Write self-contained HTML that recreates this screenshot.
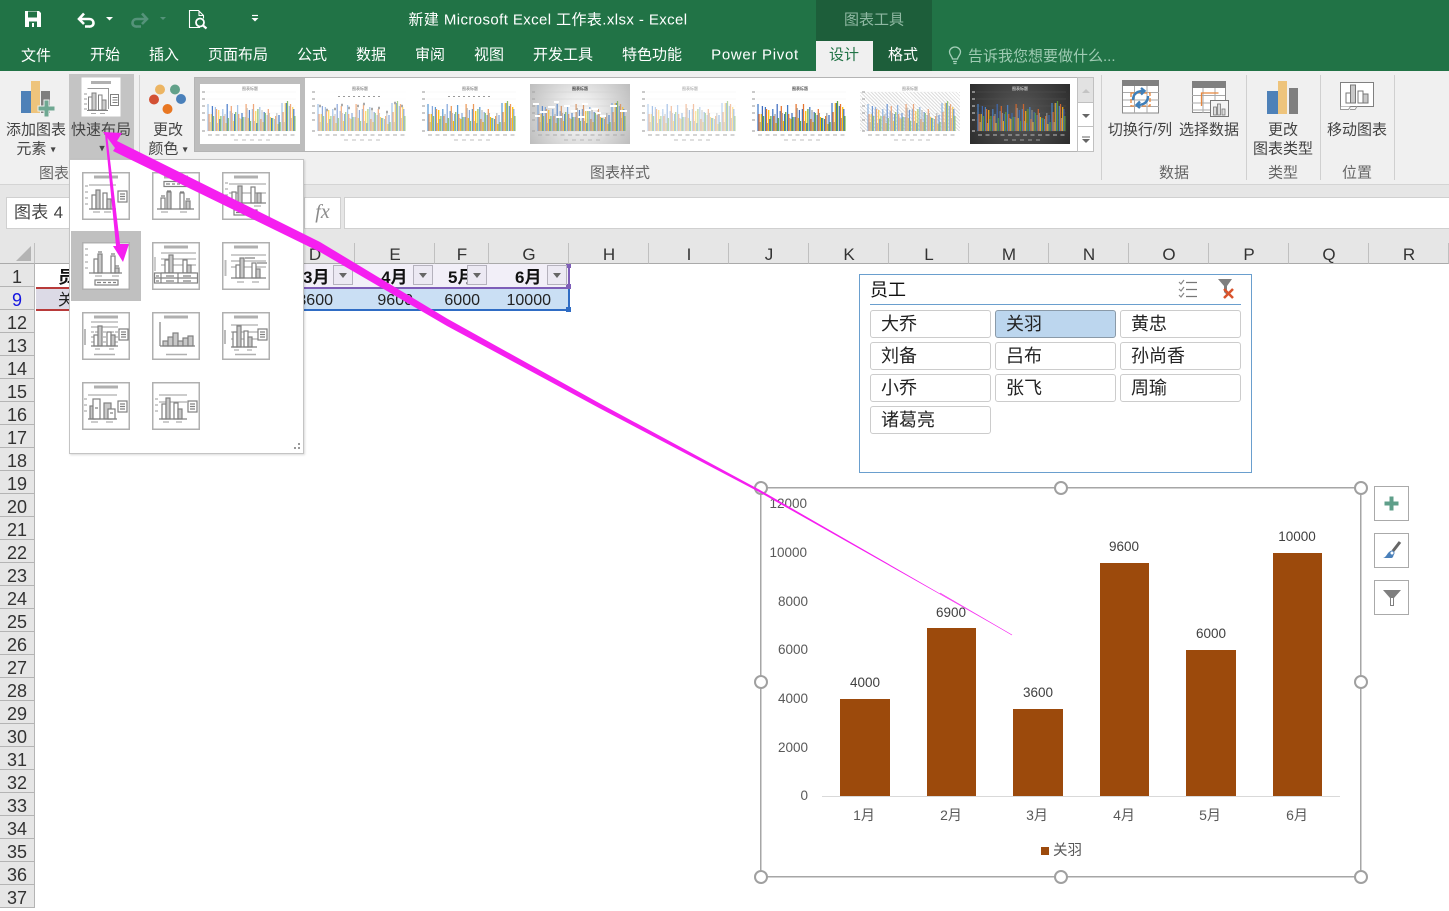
<!DOCTYPE html>
<html lang="zh"><head><meta charset="utf-8"><title>新建 Microsoft Excel 工作表.xlsx - Excel</title>
<style>
*{box-sizing:border-box}
html,body{margin:0;padding:0}
body{width:1449px;height:910px;overflow:hidden;position:relative;background:#fff;font-family:"Liberation Sans","Noto Sans CJK SC",sans-serif;color:#444}
.a{position:absolute;white-space:nowrap}
.c{position:absolute;white-space:nowrap;transform:translate(-50%,-50%);line-height:1}
.tab{font-size:15px;color:#fff;margin-top:1px}
.rb{font-size:15px;color:#444;margin-top:2px}
.gp{font-size:15px;color:#666;margin-top:1px}
.rh{position:absolute;left:0;width:35px;height:23px;background:#e6e6e6;border-bottom:1px solid #b4b4b4;border-right:1px solid #b4b4b4;text-align:center;font-size:18px;line-height:26px;color:#333}
.ch{position:absolute;top:243px;height:21px;background:#e6e6e6;border-right:1px solid #c0c0c0;border-bottom:1px solid #aaa;text-align:center;font-size:17px;line-height:23px;color:#333;padding-left:1px}
.sb{position:absolute;width:121px;height:28px;border:1px solid #ccc;border-radius:3px;background:#fff;font-size:18px;line-height:27px;padding-left:10px;color:#222}
.dd{position:absolute;top:265px;width:20px;height:20px;background:#ece9f3;border:1px solid #b5b2bd}
.dd:after{content:"";position:absolute;left:5px;top:7px;border:4px solid transparent;border-top:5px solid #666;border-bottom:0}
.hd{position:absolute;font-size:17px;font-weight:bold;color:#111;line-height:22px;top:267px}
.dt{position:absolute;font-size:16px;color:#222;line-height:22px;top:290px;text-align:right}
.ico{position:absolute;width:48px;height:48px;background:#fff}
.ico path.t{stroke:#b0b0b0;stroke-width:3;fill:none}
.ico path.l{stroke:#999;stroke-width:1;fill:none}
.ico path.k{stroke:#808080;stroke-width:1.2;fill:none}
.ico rect.w{fill:#fff;stroke:#808080;stroke-width:1.2}
.ico rect.g{fill:#c8c8c8;stroke:#808080;stroke-width:1.2}
.ico rect.f{fill:#fff;stroke:#b0b0b0;stroke-width:1.5}
.sd{position:absolute;left:1374px;width:35px;height:35px;background:#fff;border:1px solid #aaa}
</style></head><body>

<svg width="0" height="0" style="position:absolute">
<defs>
<symbol id="th" viewBox="0 0 100 60">
<g stroke="var(--gl,#eee)" stroke-width=".4"><path d="M6 8H96M6 15H96M6 22H96M6 29H96M6 36H96M6 47H96"/></g>
<g fill="none" stroke-width="1.25">
<path stroke="var(--c1)" d="M8 47v-27M15.4 47v-24M22.8 47v-22M30.2 47v-20M37.6 47v-26M45 47v-14M52.4 47v-22M59.8 47v-24M67.2 47v-16M74.6 47v-12M82 47v-28M89.4 47v-25"/>
<path transform="translate(1.1 0)" stroke="var(--c2)" d="M8 47v-17M15.4 47v-22M22.8 47v-15M30.2 47v-25M37.6 47v-17M45 47v-27M52.4 47v-27M59.8 47v-12M67.2 47v-22M74.6 47v-15M82 47v-19M89.4 47v-27"/>
<path transform="translate(2.2 0)" stroke="var(--c3)" d="M8 47v-9M15.4 47v-8M22.8 47v-17M30.2 47v-18M37.6 47v-13M45 47v-23M52.4 47v-10M59.8 47v-21M67.2 47v-18M74.6 47v-18M82 47v-9M89.4 47v-13"/>
<path transform="translate(3.3 0)" stroke="var(--c4)" d="M8 47v-17M15.4 47v-21M22.8 47v-8M30.2 47v-10M37.6 47v-12M45 47v-13M52.4 47v-20M59.8 47v-9M67.2 47v-14M74.6 47v-7M82 47v-28M89.4 47v-24"/>
<path transform="translate(4.4 0)" stroke="var(--c5)" d="M8 47v-25M15.4 47v-12M22.8 47v-27M30.2 47v-17M37.6 47v-18M45 47v-21M52.4 47v-8M59.8 47v-19M67.2 47v-13M74.6 47v-16M82 47v-28M89.4 47v-22"/>
<path transform="translate(5.5 0)" stroke="var(--c6)" d="M8 47v-15M15.4 47v-15M22.8 47v-13M30.2 47v-19M37.6 47v-14M45 47v-10M52.4 47v-22M59.8 47v-18M67.2 47v-13M74.6 47v-9M82 47v-30M89.4 47v-15"/>
</g>
<path stroke="var(--tx,#aaa)" stroke-width="1" d="M8 51h4M15.5 51h4M23 51h4M30.5 51h4M38 51h4M45.500 51h4M53 51h4M60.500 51h4M68 51h4M75.500 51h4M83 51h4M90.500 51h4" fill="none"/>
<path stroke="var(--tx,#aaa)" stroke-width=".8" d="M34 56h4M42 56h4M50 56h4M58 56h4M66 56h4" fill="none"/>
<path stroke="var(--tx,#aaa)" stroke-width="1.200" d="M2 8h3M2 15h3M2 22h3M2 29h3M2 36h3M2 47h3" fill="none"/>
</symbol>
</defs>
</svg>

<!-- top green -->
<div class="a" style="left:0;top:0;width:1449px;height:71px;background:#217346"></div>
<div class="a" style="left:816px;top:0;width:116px;height:71px;background:#1d5e3a"></div>
<div class="a" style="left:816px;top:41px;width:57px;height:30px;background:#f0f0f0"></div>

<svg class="a" style="left:0;top:0" width="280" height="40">
<path fill="#fff" d="M25 11h14l2 2v14H25z"/><path fill="#217346" d="M28 11.500h9v6h-9zM29 21.500h8V27h-8z"/><path fill="#fff" d="M32 23h2v4h-2z"/>
<path fill="none" stroke="#fff" stroke-width="2.600" d="M79 19h10c6 0 6 8 0 7.500h-4M84 13.500l-5 5.500 5 5"/>
<path fill="#fff" d="M106 17h7l-3.500 3.500z"/>
<path fill="none" stroke="#55937a" stroke-width="2.600" d="M147 19h-10c-6 0-6 8 0 7.500h4M142 13.500l5 5.500-5 5"/>
<path fill="#55937a" d="M160 17h6l-3 3z"/>
<path fill="none" stroke="#fff" stroke-width="1.100" d="M200 27.500h-10.500V10.500h9l5 5v3M199 10.500v5h4.500"/>
<circle cx="200" cy="22.500" r="4" fill="none" stroke="#fff" stroke-width="1.800"/><path stroke="#fff" stroke-width="2.200" d="M203 25.500l3.500 3"/>
<path stroke="#fff" stroke-width="1.200" d="M252 15.500h6"/><path fill="#fff" d="M251.500 18h7l-3.500 3.500z"/>
</svg>
<div class="c" style="left:548px;top:20px;font-size:15px;letter-spacing:.4px;color:#fff">新建 Microsoft Excel 工作表.xlsx - Excel</div>
<div class="c" style="left:874px;top:20px;font-size:15px;color:#8fb8a2">图表工具</div>

<div class="c tab" style="left:36px;top:55px">文件</div>
<div class="c tab" style="left:105px;top:54px">开始</div>
<div class="c tab" style="left:164px;top:54px">插入</div>
<div class="c tab" style="left:238px;top:54px">页面布局</div>
<div class="c tab" style="left:312px;top:54px">公式</div>
<div class="c tab" style="left:371px;top:54px">数据</div>
<div class="c tab" style="left:430px;top:54px">审阅</div>
<div class="c tab" style="left:489px;top:54px">视图</div>
<div class="c tab" style="left:563px;top:54px">开发工具</div>
<div class="c tab" style="left:652px;top:54px">特色功能</div>
<div class="c tab" style="left:755px;top:54px;letter-spacing:.7px">Power Pivot</div>
<div class="c tab" style="left:844px;top:54px;color:#217346">设计</div>
<div class="c tab" style="left:903px;top:54px">格式</div>
<svg class="a" style="left:947px;top:46px" width="16" height="20"><path fill="none" stroke="#a5cfb9" stroke-width="1.300" d="M5.500 13C5 10 2.500 9 2.500 6a5.500 5 0 0 1 11 0c0 3-2.500 4-3 7zM6 15.500h4M6.500 17.500h3"/></svg>
<div class="a" style="left:968px;top:47px;font-size:15px;line-height:19px;color:#9fcbb3">告诉我您想要做什么...</div>

<!-- ribbon -->
<div class="a" style="left:0;top:71px;width:1449px;height:114px;background:#f0f0f0;border-bottom:1px solid #d4d4d4"></div>
<div class="a" style="left:69px;top:74px;width:65px;height:86px;background:#c4c4c4"></div>
<div class="a" style="left:139px;top:75px;width:1px;height:105px;background:#d0d0d0"></div>
<div class="a" style="left:1101px;top:75px;width:1px;height:105px;background:#d0d0d0"></div>
<div class="a" style="left:1246px;top:75px;width:1px;height:105px;background:#d0d0d0"></div>
<div class="a" style="left:1320px;top:75px;width:1px;height:105px;background:#d0d0d0"></div>
<div class="a" style="left:1394px;top:75px;width:1px;height:105px;background:#d0d0d0"></div>

<svg class="a" style="left:0;top:70px" width="200" height="50">
<rect x="21" y="21" width="13" height="22" fill="#4e81b8"/><rect x="31" y="11" width="9" height="32" fill="#eec47c"/><rect x="41" y="21" width="9" height="22" fill="#7f7f7f"/>
<path fill="#6fa892" stroke="#f0f0f0" d="M44 29h5v6h6v5h-6v6h-5v-6h-6v-5h6z" transform="translate(0 1)"/>
<rect x="81.500" y="7.500" width="39" height="39" fill="#fff"/><path stroke="#b0b0b0" stroke-width="3" d="M91 12.500h20"/>
<path fill="none" stroke="#999" d="M87.500 18.500h21V39M84 24h3M84 29h3M84 34h3M84 39h3"/>
<rect x="88.500" y="27" width="3.500" height="13" fill="#fff" stroke="#808080"/><rect x="92" y="23" width="4" height="17" fill="#ccc" stroke="#808080"/><rect x="98.500" y="25" width="3.500" height="15" fill="#fff" stroke="#808080"/><rect x="102" y="30" width="4" height="10" fill="#ccc" stroke="#808080"/>
<path stroke="#808080" d="M87 40.500h21"/>
<rect x="110.500" y="24.500" width="8" height="11" fill="#fff" stroke="#808080"/><path stroke="#808080" d="M112.500 27.500h5M112.500 30h5M112.500 32.500h5"/>
<path stroke="#aaa" d="M91 43.500h5M100 43.500h5"/>
<circle cx="160" cy="19.500" r="5" fill="#ecb563"/><circle cx="175" cy="19.500" r="5" fill="#62a18a"/><circle cx="154" cy="29.500" r="5" fill="#d35134"/><circle cx="181" cy="29" r="5" fill="#4a80ba"/><circle cx="167.500" cy="39" r="5" fill="#e87722"/>
</svg>
<div class="c rb" style="left:36px;top:128px">添加图表</div>
<div class="c rb" style="left:36px;top:147px">元素 <span style="font-size:10px;vertical-align:1px">▾</span></div>
<div class="c rb" style="left:101px;top:128px">快速布局</div>
<div class="c" style="left:102px;top:149px;font-size:11px;color:#444">▾</div>
<div class="c rb" style="left:168px;top:128px">更改</div>
<div class="c rb" style="left:168px;top:147px">颜色 <span style="font-size:10px;vertical-align:1px">▾</span></div>
<div class="a gp" style="left:39px;top:163px;line-height:19px">图表</div>

<!-- gallery -->
<div class="a" style="left:194px;top:77px;width:884px;height:75px;background:#fff;border:1px solid #b4b4b4"></div>
<div class="a" style="left:195px;top:78px;width:110px;height:73px;background:#bdbdbd"></div>
<div class="a" style="left:1077px;top:77px;width:17px;height:75px;background:#fff;border:1px solid #c0c0c0"></div>
<div class="a" style="left:1078px;top:78px;width:15px;height:25px;background:#e2e2e2;border-bottom:1px solid #c0c0c0"></div>
<div class="a" style="left:1078px;top:126px;width:15px;height:1px;background:#c0c0c0"></div>
<svg class="a" style="left:1078px;top:78px" width="16" height="74"><path fill="#c4c4c4" d="M4 15l4-4 4 4z"/><path fill="#666" d="M4 36h8l-4 4zM4 61h8l-4 4z"/><path stroke="#666" d="M4 59h8"/></svg>

<div class="a" style="left:200px;top:84px;width:100px;height:60px;background:#fff;--c1:#a5c3e8;--c2:#f0a87a;--c3:#c9c9c9;--c4:#ffd966;--c5:#4d7fcc;--c6:#8cc06f"><svg width="100" height="60" style="display:block"><use href="#th"/><text x="50" y="6" font-size="4" text-anchor="middle" fill="#777">图表标题</text></svg></div>
<div class="a" style="left:310px;top:84px;width:100px;height:60px;background:#fff;--c1:#a5c3e8;--c2:#f4b183;--c3:#cfcfcf;--c4:#ffd966;--c5:#8faadc;--c6:#a9d18e;--gl:#f8f8f8"><svg width="100" height="60" style="display:block"><use href="#th"/><text x="50" y="6" font-size="4" text-anchor="middle" fill="#666">图表标题</text><path stroke="#999" d="M28 12.500h44" stroke-dasharray="2 3" fill="none"/><path stroke="#aaa" stroke-width="2.500" fill="none" d="M9 22h2M16 26h2M24 25h2M31 21h2M38 24h2M47 22h2M53 20h2M61 25h2M68 24h2M76 28h2M84 19h2M91 22h2"/></svg></div>
<div class="a" style="left:420px;top:84px;width:100px;height:60px;background:#fff;--c1:#5b9bd5;--c2:#ed9a58;--c3:#bbb;--c4:#ffc000;--c5:#86a8dc;--c6:#8fbf67"><svg width="100" height="60" style="display:block"><use href="#th"/><text x="50" y="6" font-size="4" text-anchor="middle" fill="#666">图表标题</text><path stroke="#999" d="M28 12.500h44" stroke-dasharray="2 3" fill="none"/></svg></div>
<div class="a" style="left:530px;top:84px;width:100px;height:60px;background:radial-gradient(circle,#f4f4f4 20%,#bdbdbd 100%);--c1:#7fa8d9;--c2:#d99a6c;--c3:#b0b0b0;--c4:#f5c542;--c5:#5f8bc9;--c6:#8fba6a;--gl:#ccc"><svg width="100" height="60" style="display:block"><use href="#th"/><text x="50" y="6" font-size="4" text-anchor="middle" fill="#444" font-weight="bold">图表标题</text><path stroke="#fff" stroke-width="2" fill="none" d="M3 20h6M10 28h7M18 23h7M26 33h6M34 22h6M41 27h6M48 33h7M55 26h6M62 25h6M70 32h6M80 22h7M90 27h7M5 32h5M24 18h5M52 20h6M66 29h5"/></svg></div>
<div class="a" style="left:640px;top:84px;width:100px;height:60px;background:#fff;--c1:#bcd4f0;--c2:#f3c4a6;--c3:#d4d4d4;--c4:#ffe49a;--c5:#a9c4e8;--c6:#b9d8a4"><svg width="100" height="60" style="display:block"><use href="#th"/><text x="50" y="6" font-size="4" text-anchor="middle" fill="#999">图表标题</text></svg></div>
<div class="a" style="left:750px;top:84px;width:100px;height:60px;background:#fff;--c1:#3f78c6;--c2:#e7742c;--c3:#a0a0a0;--c4:#ffc000;--c5:#3f6cc0;--c6:#63a83f"><svg width="100" height="60" style="display:block"><use href="#th"/><text x="50" y="6" font-size="4" text-anchor="middle" fill="#555" font-weight="bold">图表标题</text></svg></div>
<div class="a" style="left:860px;top:84px;width:100px;height:60px;background:repeating-linear-gradient(45deg,#fff,#fff 1.500px,#ddd 1.500px,#ddd 2.500px);--c1:#8fb4e0;--c2:#eba77c;--c3:#bbb;--c4:#f8ce5e;--c5:#6f97d4;--c6:#9ac67c"><svg width="100" height="60" style="display:block"><rect width="100" height="8" fill="#fff"/><rect y="47" width="100" height="13" fill="#fff"/><use href="#th"/><text x="50" y="6" font-size="4" text-anchor="middle" fill="#888">图表标题</text></svg></div>
<div class="a" style="left:970px;top:84px;width:100px;height:60px;background:radial-gradient(circle,#555 10%,#2d2d2d 100%);--c1:#4a7fc1;--c2:#c9662f;--c3:#8a8a8a;--c4:#e8ab1b;--c5:#3f67ad;--c6:#5c9437;--gl:#555;--tx:#bbb"><svg width="100" height="60" style="display:block"><use href="#th"/><text x="50" y="6" font-size="4" text-anchor="middle" fill="#eee">图表标题</text></svg></div>

<svg class="a" style="left:1100px;top:76px" width="300" height="52">
<rect x="22.500" y="5" width="36" height="32" fill="#fff" stroke="#8a8a8a"/><rect x="22" y="4" width="37" height="6" fill="#808080"/><path stroke="#aaa" fill="none" d="M23 16.500h36M23 24h36M23 30.500h36M34.500 10v27M47 10v27"/>
<path fill="none" stroke="#e7873d" stroke-width="1.300" d="M31 17h19v13H31z" stroke-dasharray="4 2"/>
<path fill="none" stroke="#3f7fb9" stroke-width="2.400" d="M33 24c0-7 5-9 11-9M41 12l3.500 3-3.500 3.500M48 20c0 7-5 9-11 9M40 32l-3.500-3 3.500-3.500"/>
<rect x="92.500" y="5.500" width="33" height="31" fill="#fff" stroke="#8a8a8a"/><rect x="92" y="5" width="34" height="7" fill="#808080"/><path stroke="#aaa" fill="none" d="M92 19.500h33M92 27h33M92 34h33M103 12v25M115 12v25"/>
<path fill="none" stroke="#e7873d" stroke-width="1.300" d="M101.500 30V17h17"/>
<rect x="110.500" y="24.500" width="18" height="16" fill="#f4f4f4" stroke="#777"/><rect x="113.500" y="31" width="3" height="8" fill="#ddd" stroke="#777" stroke-width=".8"/><rect x="117.500" y="28" width="3" height="11" fill="#ddd" stroke="#777" stroke-width=".8"/><rect x="122" y="33" width="3" height="6" fill="#ddd" stroke="#777" stroke-width=".8"/>
<rect x="167" y="15" width="13" height="23" fill="#4e81b8"/><rect x="178" y="5" width="9" height="33" fill="#eec47c"/><rect x="189" y="12" width="9" height="26" fill="#7f7f7f"/>
<path fill="#fff" stroke="#808080" d="M240.500 6.500h33v24h-33z"/><path fill="#fff" stroke="#999" d="M240.500 30.500v3h8l2-3M250 33.500h5l2-3"/>
<rect x="246" y="17" width="4.500" height="10" fill="#fff" stroke="#777"/><rect x="250.500" y="9" width="5" height="18" fill="#c8c8c8" stroke="#777"/><rect x="258" y="15" width="5" height="12" fill="#fff" stroke="#777"/><rect x="263" y="18" width="5" height="9" fill="#c8c8c8" stroke="#777"/>
</svg>
<div class="c rb" style="left:1140px;top:128px">切换行/列</div>
<div class="c rb" style="left:1209px;top:128px">选择数据</div>
<div class="c rb" style="left:1283px;top:128px">更改</div>
<div class="c rb" style="left:1283px;top:147px">图表类型</div>
<div class="c rb" style="left:1357px;top:128px">移动图表</div>
<div class="c gp" style="left:620px;top:172px">图表样式</div>
<div class="c gp" style="left:1174px;top:172px">数据</div>
<div class="c gp" style="left:1283px;top:172px">类型</div>
<div class="c gp" style="left:1357px;top:172px">位置</div>

<!-- formula bar -->
<div class="a" style="left:0;top:185px;width:1449px;height:58px;background:#e6e6e6"></div>
<div class="a" style="left:6px;top:197px;width:70px;height:32px;background:#fff;border:1px solid #d0d0d0;font-size:17px;line-height:30px;padding-left:7px;letter-spacing:.3px;color:#444">图表 4</div>
<div class="a" style="left:304px;top:197px;width:37px;height:32px;background:#fff;border:1px solid #d0d0d0;font-family:'Liberation Serif',serif;font-style:italic;font-size:20px;line-height:29px;text-align:center;color:#8a8a8a">fx</div>
<div class="a" style="left:344px;top:197px;width:1105px;height:32px;background:#fff;border:1px solid #d0d0d0;border-right:0"></div>

<!-- column headers -->
<div class="a" style="left:0;top:243px;width:35px;height:21px;background:#e6e6e6;border-right:1px solid #c0c0c0;border-bottom:1px solid #aaa"></div>
<svg class="a" style="left:14px;top:243px" width="20" height="20"><path fill="#b4b4b4" d="M17 3v15H2z"/></svg>
<div class="ch" style="left:35px;width:240px"></div>
<div class="ch" style="left:275px;width:80px">D</div>
<div class="ch" style="left:355px;width:80px">E</div>
<div class="ch" style="left:435px;width:54px">F</div>
<div class="ch" style="left:489px;width:80px">G</div>
<div class="ch" style="left:569px;width:80px">H</div>
<div class="ch" style="left:649px;width:80px">I</div>
<div class="ch" style="left:729px;width:80px">J</div>
<div class="ch" style="left:809px;width:80px">K</div>
<div class="ch" style="left:889px;width:80px">L</div>
<div class="ch" style="left:969px;width:80px">M</div>
<div class="ch" style="left:1049px;width:80px">N</div>
<div class="ch" style="left:1129px;width:80px">O</div>
<div class="ch" style="left:1209px;width:80px">P</div>
<div class="ch" style="left:1289px;width:80px">Q</div>
<div class="ch" style="left:1369px;width:80px">R</div>

<!-- row headers -->
<div class="rh" style="top:264px">1</div>
<div class="rh" style="top:287px;color:#1515e0">9</div>
<div class="rh" style="top:310px">12</div><div class="rh" style="top:333px">13</div><div class="rh" style="top:356px">14</div><div class="rh" style="top:379px">15</div><div class="rh" style="top:402px">16</div><div class="rh" style="top:425px">17</div><div class="rh" style="top:448px">18</div><div class="rh" style="top:471px">19</div><div class="rh" style="top:494px">20</div><div class="rh" style="top:517px">21</div><div class="rh" style="top:540px">22</div><div class="rh" style="top:563px">23</div><div class="rh" style="top:586px">24</div><div class="rh" style="top:609px">25</div><div class="rh" style="top:632px">26</div><div class="rh" style="top:655px">27</div><div class="rh" style="top:678px">28</div><div class="rh" style="top:701px">29</div><div class="rh" style="top:724px">30</div><div class="rh" style="top:747px">31</div><div class="rh" style="top:770px">32</div><div class="rh" style="top:793px">33</div><div class="rh" style="top:816px">34</div><div class="rh" style="top:839px">35</div><div class="rh" style="top:862px">36</div><div class="rh" style="top:885px">37</div>

<!-- table -->
<div class="a" style="left:303px;top:264px;width:266px;height:23px;background:#f2eff8"></div>
<div class="a" style="left:303px;top:289px;width:266px;height:20px;background:#cadff4"></div>
<div class="a" style="left:36px;top:289px;width:40px;height:20px;background:#dcdae6"></div>
<div class="a" style="left:36px;top:287px;width:40px;height:2px;background:#b83a3a"></div>
<div class="a" style="left:36px;top:309px;width:40px;height:2px;background:#b83a3a"></div>
<div class="a" style="left:303px;top:287px;width:266px;height:2px;background:#7e5eb8"></div>
<div class="a" style="left:303px;top:309px;width:266px;height:2px;background:#2f6cc4"></div>
<div class="a" style="left:568px;top:265px;width:2px;height:22px;background:#7e5eb8"></div>
<div class="a" style="left:568px;top:289px;width:2px;height:20px;background:#2f6cc4"></div>
<div class="a" style="left:566px;top:264px;width:5px;height:4px;background:#7e5eb8"></div>
<div class="a" style="left:566px;top:284px;width:5px;height:5px;background:#7e5eb8"></div>
<div class="a" style="left:566px;top:307px;width:5px;height:5px;background:#2f6cc4"></div>
<div class="hd" style="left:58px">员</div><div class="a" style="left:58px;top:290px;font-size:16px;line-height:22px;color:#222">关</div>
<div class="hd" style="left:303px">3月</div><div class="dd" style="left:333px"></div>
<div class="hd" style="left:381px">4月</div><div class="dd" style="left:413px"></div>
<div class="hd" style="left:448px">5月</div><div class="dd" style="left:467px"></div>
<div class="hd" style="left:515px">6月</div><div class="dd" style="left:547px"></div>
<div class="dt" style="left:290px;width:43px;clip-path:inset(0 0 0 13px)">3600</div>
<div class="dt" style="left:370px;width:43px">9600</div>
<div class="dt" style="left:437px;width:43px">6000</div>
<div class="dt" style="left:500px;width:51px">10000</div>

<!-- slicer -->
<div class="a" style="left:859px;top:274px;width:393px;height:199px;background:#fff;border:1px solid #6a9fce"></div>
<div class="a" style="left:870px;top:280px;font-size:18px;line-height:21px;color:#111">员工</div>
<div class="a" style="left:870px;top:304px;width:371px;height:1px;background:#6a9fce"></div>
<svg class="a" style="left:1175px;top:278px" width="65" height="24">
<path fill="none" stroke="#888" stroke-width="1.200" d="M4 4l2 2 3-4M4 11l2 2 3-4M4 17l2 2 3-4"/><path stroke="#777" stroke-width="1.300" d="M11 4.500h11M11 11.500h11M11 18.500h11"/>
<path fill="#7f7f7f" d="M43 1h14l-5 7v9l-3-3V8z"/><path stroke="#d9532c" stroke-width="2.500" d="M49 11l9 9M58 11l-9 9"/>
</svg>
<div class="sb" style="left:870px;top:310px">大乔</div>
<div class="sb" style="left:995px;top:310px;background:#bcd6ee;border-color:#8a9aa8">关羽</div>
<div class="sb" style="left:1120px;top:310px">黄忠</div>
<div class="sb" style="left:870px;top:342px">刘备</div>
<div class="sb" style="left:995px;top:342px">吕布</div>
<div class="sb" style="left:1120px;top:342px">孙尚香</div>
<div class="sb" style="left:870px;top:374px">小乔</div>
<div class="sb" style="left:995px;top:374px">张飞</div>
<div class="sb" style="left:1120px;top:374px">周瑜</div>
<div class="sb" style="left:870px;top:406px">诸葛亮</div>

<!-- chart -->
<svg class="a" style="left:0;top:0" width="1449" height="910">
<rect x="760.750" y="487.750" width="600" height="389" fill="#fff" stroke="#a6a6a6" stroke-width="1.500"/>
<path stroke="#d9d9d9" d="M822 796.500H1340"/>
<g fill="#9c4a0c">
<rect x="840" y="699" width="50" height="97"/><rect x="927" y="628" width="49" height="168"/><rect x="1013" y="709" width="50" height="87"/><rect x="1100" y="563" width="49" height="233"/><rect x="1186" y="650" width="50" height="146"/><rect x="1273" y="553" width="49" height="243"/>
<rect x="1041" y="847" width="8" height="8"/>
</g>
<g font-size="13.500" fill="#595959" text-anchor="end" font-family="Liberation Sans,sans-serif">
<text x="807" y="508">12000</text><text x="807" y="557">10000</text><text x="808" y="606">8000</text><text x="808" y="654">6000</text><text x="808" y="703">4000</text><text x="808" y="752">2000</text><text x="808" y="800">0</text>
</g>
<g font-size="13.500" fill="#404040" text-anchor="middle" font-family="Liberation Sans,sans-serif">
<text x="865" y="687">4000</text><text x="951" y="617">6900</text><text x="1038" y="697">3600</text><text x="1124" y="551">9600</text><text x="1211" y="638">6000</text><text x="1297" y="541">10000</text>
</g>
<g font-size="14" fill="#595959" text-anchor="middle" font-family="Liberation Sans,Noto Sans CJK SC,sans-serif">
<text x="864" y="820">1月</text><text x="951" y="820">2月</text><text x="1037" y="820">3月</text><text x="1124" y="820">4月</text><text x="1210" y="820">5月</text><text x="1297" y="820">6月</text>
</g>
<text x="1053" y="855" font-size="14.500" fill="#595959" font-family="Liberation Sans,Noto Sans CJK SC,sans-serif">关羽</text>
<g fill="#fff" stroke="#a0a0a0" stroke-width="2"><circle cx="761" cy="488" r="6"/><circle cx="1061" cy="488" r="6"/><circle cx="1361" cy="488" r="6"/><circle cx="761" cy="682" r="6"/><circle cx="1361" cy="682" r="6"/><circle cx="761" cy="877" r="6"/><circle cx="1061" cy="877" r="6"/><circle cx="1361" cy="877" r="6"/></g>
</svg>
<div class="sd" style="top:486px"><svg width="33" height="33"><path fill="#5f9f8a" d="M14.500 9.500h4v5h5v4h-5v5h-4v-5h-5v-4h5z"/></svg></div>
<div class="sd" style="top:533px"><svg width="33" height="33"><path stroke="#666" stroke-width="3" d="M18 17l7-9"/><path fill="#4a80ba" d="M8 24c4-1 4-6 8-7l3 3c-1 3-1 4-3 4z"/><circle cx="17" cy="19" r="2" fill="#fff" stroke="#4a80ba"/></svg></div>
<div class="sd" style="top:580px"><svg width="33" height="33"><path fill="#7f7f7f" d="M8 9h18l-7 8v8h-4v-8z"/><path fill="#fff" d="M16 17h2v7h-2z"/></svg></div>

<!-- layout popup -->
<div class="a" style="left:69px;top:159px;width:235px;height:295px;background:#fff;border:1px solid #c4c4c4;box-shadow:1px 1px 2px rgba(0,0,0,.15)"></div>
<div class="a" style="left:71px;top:231px;width:70px;height:70px;background:#c0c0c0"></div>

<svg class="ico" style="left:82px;top:172px" viewBox="0 0 48 48"><rect class="f" x=".75" y=".75" width="46.500" height="46.500"/><path class="t" d="M12 5h24"/><path class="l" d="M7 13h27M3 14h3M3 20h3M3 26h3M3 32h3M11 40h7M22 40h7"/><rect class="w" x="10" y="23" width="4" height="14"/><rect class="g" x="14" y="18" width="4" height="19"/><rect class="w" x="21" y="21" width="4" height="16"/><rect class="g" x="25" y="27" width="4" height="10"/><path class="k" d="M7 37h27"/><rect class="w" x="36" y="19" width="9" height="11"/><path class="k" d="M38 22h5M38 24.500h5M38 27h5"/></svg>
<svg class="ico" style="left:152px;top:172px" viewBox="0 0 48 48"><rect class="f" x=".75" y=".75" width="46.500" height="46.500"/><path class="t" d="M12 5h24"/><rect class="w" x="12" y="9.500" width="23" height="5"/><path class="k" d="M14 12h4M20 12h3M25 12h3M30 12h3"/><rect class="w" x="9" y="26" width="4" height="11"/><rect class="g" x="15" y="20" width="4" height="17"/><rect class="w" x="28" y="21" width="4" height="16"/><rect class="g" x="34" y="29" width="4" height="8"/><path class="k" d="M5 37h37M9 24h4M15 19h4M28 20h4M34 27h4"/><path class="l" d="M9 40h7M28 40h7"/></svg>
<svg class="ico" style="left:222px;top:172px" viewBox="0 0 48 48"><rect class="f" x=".75" y=".75" width="46.500" height="46.500"/><path class="t" d="M12 5h24"/><path class="l" d="M3 11h3M3 17h3M3 23h3M7 12h37M7 21h37M32 34h7M10 34h7"/><rect class="w" x="10" y="20" width="4" height="11"/><rect class="g" x="16" y="14" width="4" height="17"/><rect class="w" x="29" y="15" width="4" height="16"/><rect class="g" x="35" y="21" width="4" height="10"/><path class="k" d="M7 31h37"/><rect class="w" x="12" y="38" width="23" height="5"/><path class="k" d="M14 40.500h4M20 40.500h3M25 40.500h3M30 40.500h3"/></svg>

<svg class="ico" style="left:82px;top:242px" viewBox="0 0 48 48"><rect class="f" x=".75" y=".75" width="46.500" height="46.500"/><path class="l" d="M3 7h3M3 13h3M3 20h3M3 26h3M13 34h7M30 34h7"/><rect class="w" x="12" y="17" width="4" height="14"/><rect class="g" x="16" y="12" width="4" height="19"/><rect class="w" x="29" y="14" width="4" height="17"/><rect class="g" x="33" y="26" width="4" height="5"/><path class="k" d="M7 31h33M16 10h4M29 12h4M33 24h4"/><rect class="w" x="13" y="38" width="23" height="5"/><path class="k" d="M15 40.500h4M21 40.500h3M26 40.500h3M31 40.500h3"/></svg>
<svg class="ico" style="left:152px;top:242px" viewBox="0 0 48 48"><rect class="f" x=".75" y=".75" width="46.500" height="46.500"/><path class="t" d="M12 5h24"/><path class="l" d="M9 11h35M9 17h35M9 23h35M3 15v14"/><rect class="w" x="13" y="18" width="4" height="13"/><rect class="g" x="17" y="13" width="4" height="18"/><rect class="w" x="31" y="18" width="4" height="13"/><rect class="g" x="35" y="23" width="4" height="8"/><path class="k" d="M9 31h35"/><rect class="w" x="2.500" y="31" width="43" height="10"/><path class="k" d="M2.500 36h43M9 31v10M26 31v10M14 34h8M14 39h8M31 34h8M31 39h8M4 34h3M4 39h3"/></svg>
<svg class="ico" style="left:222px;top:242px" viewBox="0 0 48 48"><rect class="f" x=".75" y=".75" width="46.500" height="46.500"/><path class="t" d="M12 5h24"/><path class="l" d="M9 13h35M9 19h35M9 25h35M15 40h7M30 40h7"/><path d="M3.500 18v16" stroke="#bbb" stroke-width="2"/><rect class="w" x="14" y="23" width="4" height="13"/><rect class="g" x="18" y="16" width="4" height="20"/><rect class="w" x="30" y="21" width="4" height="15"/><rect class="g" x="34" y="27" width="4" height="9"/><path class="k" d="M9 36h35M23 16h10M35 21h10"/></svg>

<svg class="ico" style="left:82px;top:312px" viewBox="0 0 48 48"><rect class="f" x=".75" y=".75" width="46.500" height="46.500"/><path class="t" d="M12 5h24"/><path class="l" d="M9 10h27M9 15h27" /><path class="l" stroke-dasharray="3 1" d="M9 20h27M9 25h27M9 30h27"/><path d="M3 17v16" stroke="#bbb" stroke-width="2"/><path d="M12 42.500h21" stroke="#b0b0b0" stroke-width="1.500"/><path class="l" d="M13 37h5M27 37h5"/><rect class="w" x="12" y="23" width="4" height="11"/><rect class="g" x="16" y="14" width="4" height="20"/><rect class="w" x="25" y="20" width="4" height="14"/><rect class="g" x="29" y="23" width="4" height="11"/><path class="k" d="M9 34h27"/><rect class="w" x="37" y="17" width="9" height="11"/><path class="k" d="M39 20h5M39 22.500h5M39 25h5"/></svg>
<svg class="ico" style="left:152px;top:312px" viewBox="0 0 48 48"><rect class="f" x=".75" y=".75" width="46.500" height="46.500"/><path class="t" d="M12 5h24"/><path class="k" d="M8 10v24"/><path d="M14 42.500h21" stroke="#b0b0b0" stroke-width="1.500"/><rect class="g" x="11" y="29" width="5" height="5"/><rect class="g" x="16" y="25" width="5" height="9"/><rect class="g" x="21" y="21" width="5" height="13"/><rect class="g" x="26" y="29" width="5" height="5"/><rect class="g" x="31" y="26" width="5" height="8"/><rect class="g" x="36" y="24" width="5" height="10"/><path class="k" d="M8 34h35"/></svg>
<svg class="ico" style="left:222px;top:312px" viewBox="0 0 48 48"><rect class="f" x=".75" y=".75" width="46.500" height="46.500"/><path class="t" d="M12 5h24"/><path class="l" d="M9 13h27M9 20h27M9 27h27"/><path d="M3 18v14" stroke="#bbb" stroke-width="2"/><path d="M13 42.500h21" stroke="#b0b0b0" stroke-width="1.500"/><path class="l" d="M12 38h5M25 38h5"/><rect class="w" x="11" y="20" width="4" height="15"/><rect class="g" x="15" y="14" width="4" height="21"/><rect class="w" x="22" y="19" width="4" height="16"/><rect class="g" x="26" y="25" width="4" height="10"/><path class="k" d="M9 35h26"/><rect class="w" x="36" y="17" width="9" height="11"/><path class="k" d="M38 20h5M38 22.500h5M38 25h5"/></svg>

<svg class="ico" style="left:82px;top:382px" viewBox="0 0 48 48"><rect class="f" x=".75" y=".75" width="46.500" height="46.500"/><path class="t" d="M12 5h24"/><path class="l" d="M6 13h29M2 17h3M2 23h3M2 29h3M9 40h7M24 40h7"/><rect class="g" x="8" y="24" width="5" height="13"/><rect class="w" x="11" y="17" width="7" height="20"/><rect class="g" x="22" y="21" width="7" height="16"/><rect class="w" x="26" y="27" width="7" height="10"/><path class="k" d="M6 37h29M13 26h3M28 31h3"/><rect class="w" x="36" y="19" width="9" height="11"/><path class="k" d="M38 22h5M38 24.500h5M38 27h5"/></svg>
<svg class="ico" style="left:152px;top:382px" viewBox="0 0 48 48"><rect class="f" x=".75" y=".75" width="46.500" height="46.500"/><path class="l" d="M7 13h28M7 20h28M3 17h3M3 23h3M3 29h3M11 40h6M24 40h6"/><rect class="w" x="10" y="22" width="4" height="15"/><rect class="g" x="14" y="16" width="4" height="21"/><rect class="w" x="22" y="21" width="4" height="16"/><rect class="g" x="26" y="27" width="4" height="10"/><path class="k" d="M7 37h28"/><rect class="w" x="36" y="19" width="9" height="11"/><path class="k" d="M38 22h5M38 24.500h5M38 27h5"/></svg>
<svg class="a" style="left:290px;top:442px" width="12" height="10"><path fill="#999" d="M8 1h2v2H8zM4 5h2v2H4zM8 5h2v2H8z"/></svg>

<!-- magenta arrows -->
<svg class="a" style="left:0;top:0" width="1449" height="910">
<path fill="#f51ff0" d="M103 132L122 133L117 141L320 242L447 318.500L600 403.500L760 490L1012 635L760 492.500L600 408.500L447 326L320 252L113 151L115 148Z"/>
<path stroke="#f51ff0" stroke-width=".7" fill="none" d="M940 593L1012 635"/>
<path fill="#f51ff0" d="M105 134L107 134L120 244L129 244L123 262L113 246L116 246Z"/>
</svg>
</body></html>
